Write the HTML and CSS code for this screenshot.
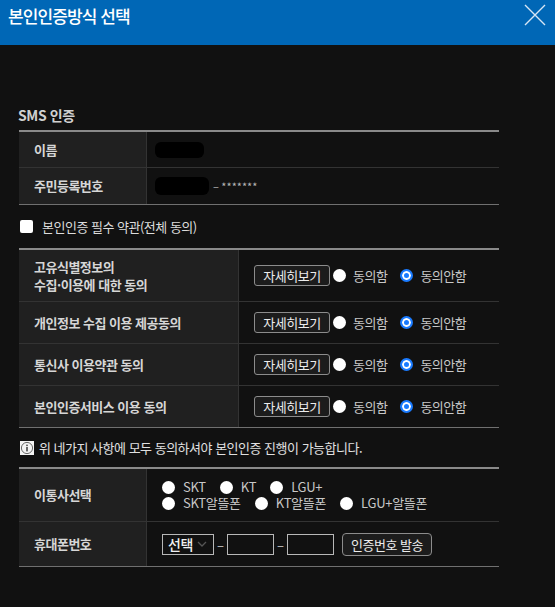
FILE: index.html
```html
<!DOCTYPE html>
<html lang="ko">
<head>
<meta charset="utf-8">
<title>본인인증방식 선택</title>
<link rel="stylesheet" href="styles.css">
</head>
<body>
<header class="hd">
  <h1 class="hd-title">본인인증방식 선택</h1>
  <button class="hd-close" type="button" aria-label="닫기">
    <svg width="22" height="22" viewBox="0 0 22 22"><path d="M1 1 L21 21 M21 1 L1 21" stroke="#d6e6f5" stroke-width="1.4" fill="none"/></svg>
  </button>
</header>
<main class="main">
  <h2 class="sec-title">SMS 인증</h2>
  <div class="tbl tbl-narrow">
    <div class="row">
      <div class="th">이름</div>
      <div class="td"><span class="mask mask-name"></span></div>
    </div>
    <div class="row">
      <div class="th">주민등록번호</div>
      <div class="td"><span class="mask mask-id"></span><span class="stars">– *******</span></div>
    </div>
  </div>
  <label class="agree-all"><input type="checkbox" class="chk"><span>본인인증 필수 약관(전체 동의)</span></label>
  <div class="tbl tbl-wide">
    <div class="row row-tall">
      <div class="th">고유식별정보의<br>수집·이용에 대한 동의</div>
      <div class="td"><button class="btn" type="button">자세히보기</button><input type="radio" name="a1" class="rd"><span class="rl">동의함</span><input type="radio" name="a1" class="rd" checked><span class="rl">동의안함</span></div>
    </div>
    <div class="row">
      <div class="th">개인정보 수집 이용 제공동의</div>
      <div class="td"><button class="btn" type="button">자세히보기</button><input type="radio" name="a2" class="rd"><span class="rl">동의함</span><input type="radio" name="a2" class="rd" checked><span class="rl">동의안함</span></div>
    </div>
    <div class="row">
      <div class="th">통신사 이용약관 동의</div>
      <div class="td"><button class="btn" type="button">자세히보기</button><input type="radio" name="a3" class="rd"><span class="rl">동의함</span><input type="radio" name="a3" class="rd" checked><span class="rl">동의안함</span></div>
    </div>
    <div class="row row-last">
      <div class="th">본인인증서비스 이용 동의</div>
      <div class="td"><button class="btn" type="button">자세히보기</button><input type="radio" name="a4" class="rd"><span class="rl">동의함</span><input type="radio" name="a4" class="rd" checked><span class="rl">동의안함</span></div>
    </div>
  </div>
  <p class="info">
    <svg class="info-ico" width="14" height="14" viewBox="0 0 14 14"><rect width="14" height="14" fill="#f4f4f4"/><circle cx="7" cy="7" r="5.6" fill="none" stroke="#6a6a6a" stroke-width="1"/><circle cx="7" cy="4.3" r="0.9" fill="#4a4a4a"/><rect x="6.2" y="6" width="1.6" height="4.4" fill="#4a4a4a"/></svg>
    <span>위 네가지 사항에 모두 동의하셔야 본인인증 진행이 가능합니다.</span>
  </p>
  <div class="tbl tbl-narrow">
    <div class="row row-carrier">
      <div class="th">이통사선택</div>
      <div class="td td-carrier">
        <div class="opt-line"><input type="radio" name="c" class="rd"><span class="ol">SKT</span><input type="radio" name="c" class="rd"><span class="ol">KT</span><input type="radio" name="c" class="rd"><span class="ol">LGU+</span></div>
        <div class="opt-line"><input type="radio" name="c" class="rd"><span class="ol">SKT알뜰폰</span><input type="radio" name="c" class="rd"><span class="ol">KT알뜰폰</span><input type="radio" name="c" class="rd"><span class="ol">LGU+알뜰폰</span></div>
      </div>
    </div>
    <div class="row row-phone">
      <div class="th">휴대폰번호</div>
      <div class="td">
        <div class="sel"><span>선택</span><svg width="10" height="6" viewBox="0 0 10 6"><path d="M1 1 L5 5 L9 1" stroke="#555" stroke-width="1.3" fill="none"/></svg></div>
        <span class="dash">–</span>
        <input type="text" class="inp">
        <span class="dash">–</span>
        <input type="text" class="inp">
        <button class="btn btn-send" type="button">인증번호 발송</button>
      </div>
    </div>
  </div>
</main>
</body>
</html>
```
FILE: styles.css
```css
* { box-sizing: border-box; }
body {
  margin: 0;
  background: #111111;
  font-family: "Noto Sans CJK KR", "Noto Sans", sans-serif;
  font-size: 13px;
  letter-spacing: -0.5px;
  color: #d8d8d8;
  width: 555px;
  height: 607px;
  overflow: hidden;
}
.hd {
  height: 45px;
  background: #0067b6;
  display: flex;
  justify-content: space-between;
  align-items: flex-start;
  padding-left: 8px;
}
.hd-title {
  margin: 0;
  font-size: 17px;
  font-weight: 500;
  letter-spacing: -0.9px;
  line-height: 32px;
  color: #ffffff;
}
.hd-close {
  margin: 4px 9px 0 0;
  padding: 0;
  border: 0;
  background: none;
  width: 22px;
  height: 22px;
  display: flex;
}
.main {
  width: 480px;
  margin-left: 19px;
  padding-top: 60px;
}
.sec-title {
  margin: 0 0 5px -1px;
  font-size: 14px;
  font-weight: 700;
  letter-spacing: -0.4px;
  line-height: 20px;
  color: #d0d0d0;
}
.tbl {
  border-top: 2px solid #8a8a8a;
  border-bottom: 1px solid #707070;
}
.row {
  display: grid;
  border-bottom: 1px solid #333333;
  height: 36px;
}
.tbl-narrow .row { grid-template-columns: 128px 1fr; }
.tbl-wide .row { grid-template-columns: 220px 1fr; height: 42px; }
.tbl-wide .row-tall { height: 52px; }
.tbl-wide .row-last { height: 41px; border-bottom: 0; }
.tbl-narrow .row:last-child { border-bottom: 0; }
.th {
  background: #202020;
  border-right: 1px solid #333333;
  padding-left: 15px;
  display: flex;
  align-items: center;
  font-weight: 700;
  color: #d6d6d6;
  line-height: 18px;
}
.td {
  display: flex;
  align-items: center;
  padding-left: 8px;
}
.mask {
  display: inline-block;
  background: #000;
  border-radius: 6px;
}
.mask-name { width: 49px; height: 16px; }
.mask-id { width: 54px; height: 18px; margin-right: 4px; }
.stars { color: #b8b8b8; font-size: 11px; letter-spacing: 0; }
.agree-all {
  display: flex;
  align-items: center;
  height: 43px;
  padding-left: 1px;
  color: #dcdcdc;
}
.chk {
  appearance: none;
  -webkit-appearance: none;
  width: 13px;
  height: 13px;
  margin: 0 9px 0 0;
  background: #fff;
  border-radius: 2px;
  border: 0;
}
.tbl-wide .td { padding-left: 15px; }
.btn {
  font: inherit;
  letter-spacing: -0.5px;
  height: 21px;
  width: 76px;
  padding: 0;
  border: 1px solid #8c8c8c;
  border-radius: 3px;
  background: #1c1c1c;
  color: #ececec;
  line-height: 19px;
}
.rd {
  appearance: none;
  -webkit-appearance: none;
  width: 13px;
  height: 13px;
  margin: 0 7px 0 3px;
  border-radius: 50%;
  background: #ffffff;
  border: 0;
  flex: none;
}
.rd:checked {
  border: 2px solid #1a7bff;
  box-shadow: inset 0 0 0 2px #fff;
  background: #1a7bff;
}
.rl { color: #c8c8c8; margin-right: 10px; }
.info {
  margin: 0;
  height: 39px;
  display: flex;
  align-items: center;
  padding-left: 1px;
  color: #e0e0e0;
}
.info-ico { margin-right: 5px; flex: none; }
.row-carrier { height: 53px; }
.td-carrier {
  flex-direction: column;
  align-items: flex-start;
  justify-content: center;
  padding-left: 15px;
}
.opt-line {
  display: flex;
  align-items: center;
  height: 16px;
  line-height: 16px;
}
.opt-line .rd { margin: 0 8px 0 0; }
.ol { color: #c8c8c8; margin-right: 14px; letter-spacing: -0.3px; }
.row-phone { height: 44px; }
.row-phone .td { padding-left: 15px; }
.sel {
  width: 52px;
  height: 21px;
  border: 1px solid #b8b8b8;
  display: flex;
  align-items: center;
  padding-left: 5px;
  gap: 4px;
  font-size: 14px;
  font-weight: 500;
  color: #f0f0f0;
}
.dash { color: #c8c8c8; width: 13px; text-align: center; letter-spacing: 0; }
.inp {
  width: 47px;
  height: 21px;
  border: 1px solid #b8b8b8;
  background: transparent;
  padding: 0;
}
.btn-send {
  width: 90px;
  height: 23px;
  border-radius: 4px;
  margin-left: 8px;
}
```
